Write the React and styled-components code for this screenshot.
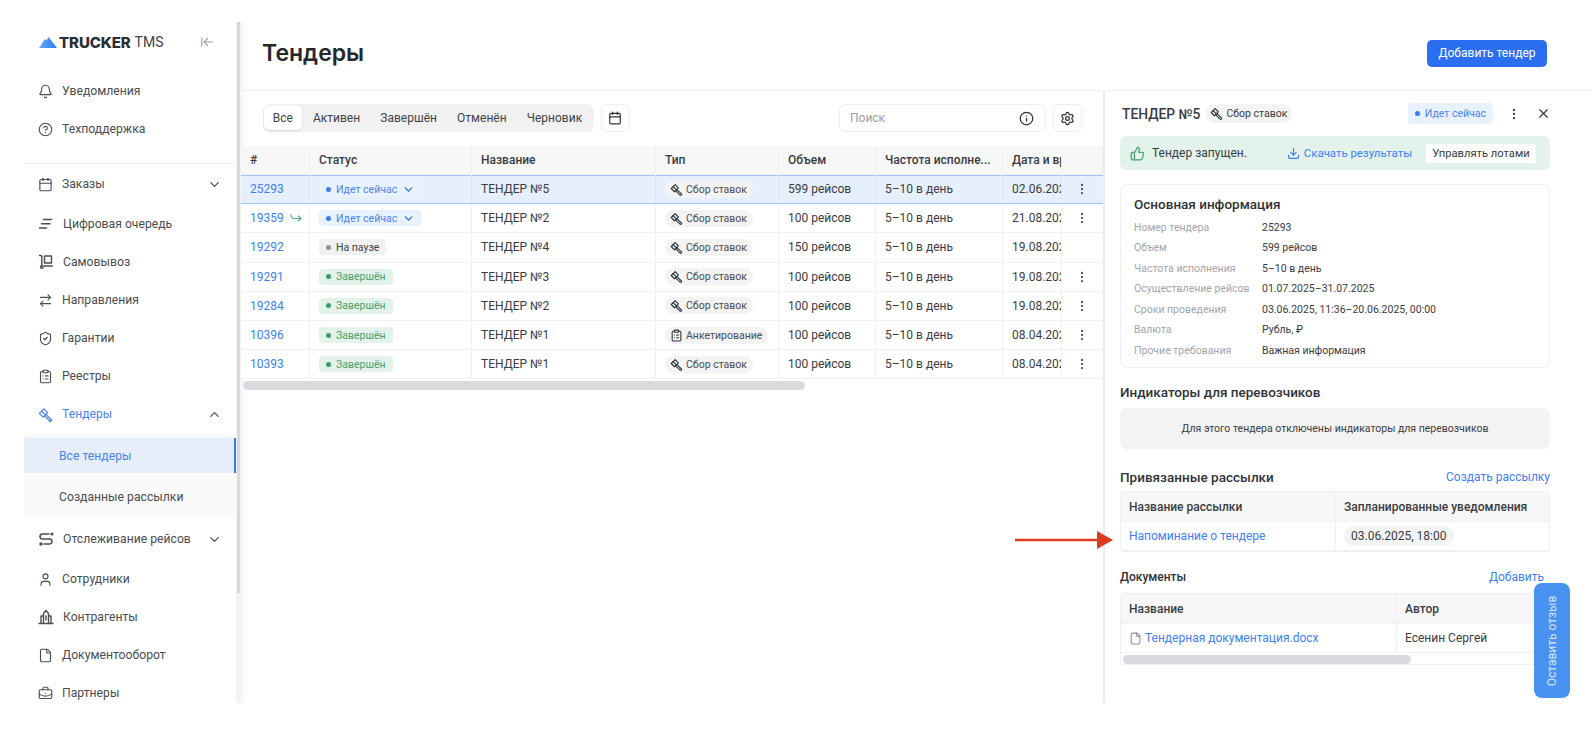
import React from 'react'
import styled, { createGlobalStyle } from 'styled-components'
import {
  ArrowLeftToLine, ArrowRightLeft, Bell, BriefcaseBusiness, Calendar, ChevronDown, ChevronUp,
  CircleHelp, ClipboardList, Download, File, Info, MoreVertical, Settings,
  ShieldCheck, ThumbsUp, User, X,
} from 'lucide-react'

const GlobalStyle = createGlobalStyle`
  html, body { margin: 0; padding: 0; background: #fff; }
  body { font-family: Roboto, "Noto Sans", sans-serif; color: #2b2d33; overflow: hidden; }
  * { box-sizing: border-box; }
`

const Page = styled.div`
  position: relative;
  width: 1592px;
  height: 736px;
  padding: 22px 0 33px 24px;
  display: flex;
  overflow: hidden;
`

const Sidebar = styled.aside`
  width: 212px;
  flex: none;
  overflow: hidden;
  display: flex;
  flex-direction: column;
`

const LogoRow = styled.div`
  height: 40px;
  flex: none;
  margin-bottom: 10px;
  padding: 0 22px 0 15px;
  display: flex;
  align-items: center;
  justify-content: space-between;
  color: #9a9da3;
`

const Logo = styled.div`
  display: flex;
  align-items: center;
  gap: 2px;
  font-family: Inter, sans-serif;
  font-size: 15px;
  letter-spacing: -0.1px;
  color: #2b2d33;
  b { font-weight: 800; margin-right: 2px; }
  span { font-family: Roboto, sans-serif; font-weight: 400; font-size: 14px; letter-spacing: 0; color: #3f4247; }
`

const NavItem = styled.div`
  height: 38px;
  flex: none;
  display: flex;
  align-items: center;
  padding: 0 14px 0 14px;
  gap: 9px;
  font-size: 12.2px;
  color: ${p => (p.$active ? '#4c83f0' : '#4a4d52')};
  margin-top: ${p => (p.$gap ? '2px' : '0')};
  span { flex: 1; white-space: nowrap; }
  svg { flex: none; }
`

const NavDivider = styled.div`
  height: 1px;
  flex: none;
  background: #f0f0f1;
  margin: 15px 0 1px;
`

const SubNav = styled.div`
  flex: none;
  margin: 2px 0;
  padding-top: 3px;
  background: #fafafa;
  display: flex;
  flex-direction: column;
`

const SubItem = styled.div`
  height: ${p => (p.$active ? '35px' : '45px')};
  padding-top: ${p => (p.$active ? '0' : '3px')};
  display: flex;
  align-items: center;
  padding-left: 35px;
  font-size: 12.2px;
  color: ${p => (p.$active ? '#4c83f0' : '#4a4d52')};
  background: ${p => (p.$active ? '#e6eefb' : 'transparent')};
  border-right: 2px solid ${p => (p.$active ? '#3b7cf5' : 'transparent')};
`

const ScrollTrack = styled.div`
  width: 5px;
  flex: none;
  background: #f4f4f5;
`

const ScrollThumb = styled.div`
  width: 3px;
  height: 571px;
  margin-left: 1px;
  background: #d9d9dc;
`

const Main = styled.main`
  flex: 1;
  min-width: 0;
  display: flex;
  flex-direction: column;
  box-shadow: inset 8px 0 8px -8px rgba(0, 0, 0, 0.08);
`

const Header = styled.header`
  height: 69px;
  flex: none;
  padding: 0 45px 6px 21px;
  display: flex;
  align-items: center;
  justify-content: space-between;
  border-bottom: 1px solid #f1f1f2;
`

const Title = styled.h1`
  margin: 0;
  font-family: Inter, sans-serif;
  font-size: 23px;
  font-weight: 600;
  color: #25272c;
`

const PrimaryButton = styled.button`
  width: 120px;
  height: 27px;
  border: 0;
  border-radius: 5px;
  background: #2b6ff0;
  color: #fff;
  font: 400 12px Roboto, sans-serif;
`

const Body = styled.div`
  flex: 1;
  min-height: 0;
  display: flex;
`

const TablePane = styled.section`
  width: 862px;
  flex: none;
  display: flex;
  flex-direction: column;
`

const Toolbar = styled.div`
  display: flex;
  align-items: center;
  height: 28px;
  margin: 13px 21px 14px 22px;
  gap: 7px;
`

const Segments = styled.div`
  height: 28px;
  padding: 2px 3px 2px 1px;
  border-radius: 7px;
  background: #f1f1f2;
  display: flex;
  align-items: center;
`

const Segment = styled.div`
  height: 24px;
  padding: 0 8.7px;
  margin-right: ${p => (p.$last ? '0' : '2.8px')};
  border-radius: 5px;
  display: flex;
  align-items: center;
  font-size: 12px;
  color: #3f4247;
  background: ${p => (p.$active ? '#fff' : 'transparent')};
  box-shadow: ${p => (p.$active ? '0 1px 2px rgba(0,0,0,.12)' : 'none')};
`

const IconButton = styled.div`
  width: 29px;
  height: 28px;
  flex: none;
  border: 1px solid #eeeeef;
  border-radius: 6px;
  display: flex;
  align-items: center;
  justify-content: center;
  color: #303237;
`

const Search = styled.div`
  width: 207px;
  height: 28px;
  margin-left: auto;
  padding: 0 11px 0 10px;
  border: 1px solid #eeeeef;
  border-radius: 6px;
  display: flex;
  align-items: center;
  justify-content: space-between;
  font-size: 12px;
  color: #9a9da3;
  svg { color: #303237; }
`

const TENDER_COLUMNS = '69px 162px 184px 123px 97px 127px 59px 41px'

const GridRow = styled.div`
  display: grid;
  grid-template-columns: ${TENDER_COLUMNS};
  height: ${p => (p.$head ? '29px' : '29.2px')};
  background: ${p => (p.$head ? '#f7f7f7' : p.$selected ? '#e6effc' : '#fff')};
  box-shadow: ${p => (p.$selected ? 'inset 0 1px 0 #a6c3f5, inset 0 -1px 0 #a6c3f5' : 'none')};
`

const Cell = styled.div`
  min-width: 0;
  padding-left: 9px;
  display: flex;
  align-items: center;
  gap: 6px;
  overflow: hidden;
  white-space: nowrap;
  font-size: 12px;
  font-weight: ${p => (p.$head ? 500 : 400)};
  color: #3a3c42;
  border-right: 1px solid ${p => (p.$selected ? '#dbe6f8' : '#f1f1f2')};
  border-bottom: 1px solid ${p => (p.$selected ? 'transparent' : '#f1f1f2')};
`

const ActionCell = styled(Cell)`
  padding-left: 13px;
  border-right: 0;
  color: #55585e;
`

const Link = styled.span`
  color: #3f80f5;
  font-size: 12px;
`

const StatusChip = styled.span`
  height: 16px;
  padding: 0 ${p => (p.$open ? '6px' : '7px')} 0 7px;
  border-radius: 4px;
  display: inline-flex;
  align-items: center;
  gap: 5px;
  font-size: 10.5px;
  color: ${p => ({ blue: '#4c83f0', gray: '#3f4247', green: '#45a06e' }[p.$tone])};
  background: ${p => ({ blue: '#e8f1fe', gray: '#f1f1f2', green: '#e3f3ea' }[p.$tone])};
  &::before {
    content: '';
    width: 5px;
    height: 5px;
    border-radius: 50%;
    background: ${p => ({ blue: '#3b7cf5', gray: '#8e9096', green: '#3a9a65' }[p.$tone])};
  }
`

const TypeChip = styled.span`
  height: 17px;
  padding: 0 6px 0 5px;
  border-radius: 9px;
  display: inline-flex;
  align-items: center;
  gap: 3px;
  font-size: 10.5px;
  color: #4a4d52;
  background: #f3f3f4;
  svg { color: #303237; }
`

const HScroll = styled.div`
  height: 9px;
  margin: 2px 0 0 2px;
  width: ${p => p.$width};
  border-radius: 5px;
  background: #d9dadd;
`

const Pane = styled.aside`
  flex: 1;
  min-width: 0;
  padding: 12px 42px 0 15px;
  border-left: 2px solid #ececee;
  display: flex;
  flex-direction: column;
`

const PaneHead = styled.div`
  height: 21px;
  padding: 0 2px;
  margin-bottom: 12px;
  display: flex;
  align-items: center;
  gap: 6px;
  color: #3a3c42;
`

const PaneTitle = styled.div`
  font-size: 13.8px;
  font-weight: 500;
  white-space: nowrap;
`

const PaneChip = styled(TypeChip)`
  height: 19px;
  padding: 0 5px 0 4px;
  color: #3a3c42;
`

const HeadStatus = styled(StatusChip)`
  height: 21px;
  padding: 0 7px;
  margin-left: auto;
  margin-right: 8px;
  font-size: 10.5px;
`

const HeadClose = styled.div`
  margin-left: 9px;
  margin-right: -3px;
  display: flex;
`

const Banner = styled.div`
  height: 34px;
  flex: none;
  padding: 0 14px 0 10px;
  border-radius: 6px;
  background: #e3f3ec;
  display: flex;
  align-items: center;
  font-size: 12px;
  color: #3a3c42;
  svg { flex: none; }
`

const BannerText = styled.span`
  margin-left: 7px;
  flex: 1;
`

const BannerLink = styled(Link)`
  display: inline-flex;
  align-items: center;
  gap: 4px;
  font-size: 11.4px;
`

const BannerButton = styled.div`
  width: 110px;
  height: 19px;
  margin-left: 14px;
  border-radius: 2px;
  background: #fff;
  display: flex;
  align-items: center;
  justify-content: center;
  font-size: 11.2px;
`

const InfoCard = styled.div`
  height: 184px;
  flex: none;
  margin-top: 14px;
  padding: 9px 13px 0;
  border: 1px solid #f0f0f1;
  border-radius: 7px;
`

const CardTitle = styled.div`
  height: 20px;
  margin-bottom: 3px;
  display: flex;
  align-items: center;
  font-size: 13.5px;
  font-weight: 500;
  color: #303237;
`

const InfoRow = styled.div`
  height: 20.5px;
  display: grid;
  grid-template-columns: 128px 1fr;
  align-items: center;
  font-size: 10.5px;
  color: #3a3c42;
  span:first-child { color: #a3a5aa; }
`

const SectionHead = styled.div`
  height: 20px;
  flex: none;
  margin-top: ${p => p.$top};
  margin-bottom: ${p => p.$bottom};
  padding-right: ${p => p.$inset || '0'};
  display: flex;
  align-items: center;
  justify-content: space-between;
`

const SectionTitle = styled.div`
  font-size: ${p => p.$size || '13.5px'};
  font-weight: 500;
  color: #303237;
`

const EmptyBox = styled.div`
  height: 41px;
  flex: none;
  border-radius: 7px;
  background: #f3f3f4;
  display: flex;
  align-items: center;
  justify-content: center;
  font-size: 10.5px;
  color: #3a3c42;
`

const MiniTable = styled.div`
  flex: none;
  border: 1px solid #f0f0f1;
  border-radius: 3px;
  overflow: hidden;
`

const MiniRow = styled.div`
  display: grid;
  grid-template-columns: ${p => p.$columns};
  height: ${p => p.$height};
  background: ${p => (p.$head ? '#f7f7f7' : '#fff')};
`

const MiniCell = styled(Cell)`
  padding-left: 8px;
  gap: 3px;
  &:last-child { border-right: 0; }
`

const DateChip = styled.span`
  height: 20px;
  padding: 0 7px;
  border-radius: 10px;
  background: #f3f3f4;
  display: inline-flex;
  align-items: center;
  font-size: 12px;
`

const FeedbackTab = styled.div`
  position: absolute;
  left: 1534px;
  top: 583px;
  width: 36px;
  height: 115px;
  border-radius: 8px;
  background: #4a92f2;
  color: #d5e6fc;
  display: flex;
  align-items: center;
  justify-content: center;
  font-size: 12px;
  white-space: nowrap;
  span { transform: rotate(-90deg); }
`

const ArrowMark = styled.svg`
  position: absolute;
  left: 1015px;
  top: 531px;
`

const GavelIcon = ({ size = 15 }) => (
  <svg width={size} height={size} viewBox="0 0 16 16" fill="none" stroke="currentColor" strokeWidth="1.4" strokeLinecap="round" strokeLinejoin="round">
    <path d="M1.500 6.800 6.300 2l4 4-4.800 4.800Z" />
    <path d="M3.900 4.400 7.900 8.400" />
    <path d="M8.900 8.400 14 13.400a1.100 1.100 0 0 1-1.600 1.500L7.400 9.900" />
  </svg>
)

const QueueIcon = () => (
  <svg width="16" height="16" viewBox="0 0 16 16" fill="none" stroke="currentColor" strokeWidth="1.4" strokeLinecap="round">
    <path d="M5.500 3.500h8M3.500 7.800h8.500M1.500 12h7" />
  </svg>
)

const PickupIcon = () => (
  <svg width="16" height="16" viewBox="0 0 16 16" fill="none" stroke="currentColor" strokeWidth="1.4" strokeLinecap="round" strokeLinejoin="round">
    <path d="M1.500 1.500h1.300a1 1 0 0 1 1 1v9" />
    <path d="M6.500 2h7v7h-7Z" />
    <path d="M6 12h8.500" />
    <circle cx="3.800" cy="13" r="1.300" />
  </svg>
)

const TrackingIcon = () => (
  <svg width="16" height="16" viewBox="0 0 16 16" fill="none" stroke="currentColor" strokeWidth="1.5" strokeLinecap="round" strokeLinejoin="round">
    <path d="M11 3H4.500a2.300 2.300 0 0 0 0 5h7a2.300 2.300 0 0 1 0 5H6" />
    <circle cx="14" cy="3" r="0.8" />
    <circle cx="3" cy="13" r="1" />
  </svg>
)

const CounterpartyIcon = () => (
  <svg width="16" height="16" viewBox="0 0 16 16" fill="none" stroke="currentColor" strokeWidth="1.4" strokeLinecap="round" strokeLinejoin="round">
    <path d="M1 14.500h14M3 14.500V7h2.500M5.500 14.500V4.500L8 1.500l2.500 3v10M10.500 7H13v7.500M8 7v4" />
  </svg>
)

const ReturnArrow = () => (
  <svg width="12" height="10" viewBox="0 0 12 10" fill="none" stroke="#57ad82" strokeWidth="1.1" strokeLinecap="round" strokeLinejoin="round">
    <path d="M1 1.500c0 3 1 4 3 4h7M8.500 3l2.500 2.500L8.500 8" />
  </svg>
)

const MountainLogo = () => (
  <svg width="18" height="11" viewBox="0 0 18 11">
    <defs>
      <linearGradient id="peak" x1="0" x2="1" y1="0" y2="0">
        <stop offset="0" stopColor="#63a6f8" />
        <stop offset="1" stopColor="#2f7cf0" />
      </linearGradient>
    </defs>
    <path d="M0 11 6 2 7.500 3.500 9.500 0 13 4.500 18 11Z" fill="url(#peak)" />
  </svg>
)

const navTop = [
  { label: 'Заказы', icon: <Calendar size={15} strokeWidth={1.8} />, chevron: true },
  { label: 'Цифровая очередь', icon: <QueueIcon />, gap: true },
  { label: 'Самовывоз', icon: <PickupIcon /> },
  { label: 'Направления', icon: <ArrowRightLeft size={15} strokeWidth={1.8} /> },
  { label: 'Гарантии', icon: <ShieldCheck size={15} strokeWidth={1.8} /> },
  { label: 'Реестры', icon: <ClipboardList size={15} strokeWidth={1.8} /> },
]

const navBottom = [
  { label: 'Сотрудники', icon: <User size={15} strokeWidth={1.8} />, gap: true },
  { label: 'Контрагенты', icon: <CounterpartyIcon /> },
  { label: 'Документооборот', icon: <File size={15} strokeWidth={1.8} /> },
  { label: 'Партнеры', icon: <BriefcaseBusiness size={15} strokeWidth={1.8} /> },
]

const tenders = [
  { id: '25293', status: 'blue', name: 'ТЕНДЕР №5', volume: '599 рейсов', date: '02.06.2025, 11:36', selected: true },
  { id: '19359', status: 'blue', name: 'ТЕНДЕР №2', volume: '100 рейсов', date: '21.08.2024, 10:00', repeat: true },
  { id: '19292', status: 'gray', name: 'ТЕНДЕР №4', volume: '150 рейсов', date: '19.08.2024, 10:00', noMenu: true },
  { id: '19291', status: 'green', name: 'ТЕНДЕР №3', volume: '100 рейсов', date: '19.08.2024, 10:00' },
  { id: '19284', status: 'green', name: 'ТЕНДЕР №2', volume: '100 рейсов', date: '19.08.2024, 10:00' },
  { id: '10396', status: 'green', name: 'ТЕНДЕР №1', volume: '100 рейсов', date: '08.04.2024, 10:00', survey: true },
  { id: '10393', status: 'green', name: 'ТЕНДЕР №1', volume: '100 рейсов', date: '08.04.2024, 10:00' },
]

const statusLabels = { blue: 'Идет сейчас', gray: 'На паузе', green: 'Завершён' }

const info = [
  ['Номер тендера', '25293'],
  ['Объем', '599 рейсов'],
  ['Частота исполнения', '5–10 в день'],
  ['Осуществление рейсов', '01.07.2025–31.07.2025'],
  ['Сроки проведения', '03.06.2025, 11:36–20.06.2025, 00:00'],
  ['Валюта', 'Рубль, ₽'],
  ['Прочие требования', 'Важная информация'],
]

const NavLink = ({ item }) => (
  <NavItem $gap={item.gap}>
    {item.icon}
    <span>{item.label}</span>
    {item.chevron && <ChevronDown size={15} />}
  </NavItem>
)

const TenderRow = ({ row }) => (
  <GridRow $selected={row.selected}>
    <Cell $selected={row.selected}>
      <Link>{row.id}</Link>
      {row.repeat && <ReturnArrow />}
    </Cell>
    <Cell $selected={row.selected}>
      <StatusChip $tone={row.status} $open={row.status === 'blue'}>
        {statusLabels[row.status]}
        {row.status === 'blue' && <ChevronDown size={13} strokeWidth={2.4} color="#2b6ff0" />}
      </StatusChip>
    </Cell>
    <Cell $selected={row.selected}>{row.name}</Cell>
    <Cell $selected={row.selected}>
      <TypeChip>
        {row.survey ? <ClipboardList size={13} /> : <GavelIcon size={13} />}
        {row.survey ? 'Анкетирование' : 'Сбор ставок'}
      </TypeChip>
    </Cell>
    <Cell $selected={row.selected}>{row.volume}</Cell>
    <Cell $selected={row.selected}>5–10 в день</Cell>
    <Cell $selected={row.selected}>{row.date}</Cell>
    <ActionCell $selected={row.selected}>
      {!row.noMenu && <MoreVertical size={14} />}
    </ActionCell>
  </GridRow>
)

const App = () => (
  <Page>
    <GlobalStyle />
    <Sidebar>
      <LogoRow>
        <Logo>
          <MountainLogo />
          <b>TRUCKER</b>
          <span>TMS</span>
        </Logo>
        <ArrowLeftToLine size={14} />
      </LogoRow>
      <NavLink item={{ label: 'Уведомления', icon: <Bell size={15} strokeWidth={1.8} /> }} />
      <NavLink item={{ label: 'Техподдержка', icon: <CircleHelp size={15} strokeWidth={1.8} /> }} />
      <NavDivider />
      {navTop.map(item => <NavLink key={item.label} item={item} />)}
      <NavItem $active>
        <GavelIcon />
        <span>Тендеры</span>
        <ChevronUp size={15} color="#4a4d52" />
      </NavItem>
      <SubNav>
        <SubItem $active>Все тендеры</SubItem>
        <SubItem>Созданные рассылки</SubItem>
      </SubNav>
      <NavLink item={{ label: 'Отслеживание рейсов', icon: <TrackingIcon />, chevron: true }} />
      {navBottom.map(item => <NavLink key={item.label} item={item} />)}
    </Sidebar>
    <ScrollTrack>
      <ScrollThumb />
    </ScrollTrack>
    <Main>
      <Header>
        <Title>Тендеры</Title>
        <PrimaryButton>Добавить тендер</PrimaryButton>
      </Header>
      <Body>
        <TablePane>
          <Toolbar>
            <Segments>
              <Segment $active>Все</Segment>
              <Segment>Активен</Segment>
              <Segment>Завершён</Segment>
              <Segment>Отменён</Segment>
              <Segment $last>Черновик</Segment>
            </Segments>
            <IconButton><Calendar size={14} strokeWidth={2} /></IconButton>
            <Search>
              Поиск
              <Info size={15} strokeWidth={2} />
            </Search>
            <IconButton><Settings size={15} /></IconButton>
          </Toolbar>
          <GridRow $head>
            {['#', 'Статус', 'Название', 'Тип', 'Объем', 'Частота исполне...', 'Дата и время', ''].map(h => (
              <Cell $head key={h}>{h}</Cell>
            ))}
          </GridRow>
          {tenders.map(row => <TenderRow key={row.id} row={row} />)}
          <HScroll $width="562px" />
        </TablePane>
        <Pane>
          <PaneHead>
            <PaneTitle>ТЕНДЕР №5</PaneTitle>
            <PaneChip><GavelIcon size={13} />Сбор ставок</PaneChip>
            <HeadStatus $tone="blue">Идет сейчас</HeadStatus>
            <MoreVertical size={14} />
            <HeadClose><X size={15} /></HeadClose>
          </PaneHead>
          <Banner>
            <ThumbsUp size={15} color="#45a06e" strokeWidth={2} />
            <BannerText>Тендер запущен.</BannerText>
            <BannerLink><Download size={13} strokeWidth={2.2} />Скачать результаты</BannerLink>
            <BannerButton>Управлять лотами</BannerButton>
          </Banner>
          <InfoCard>
            <CardTitle>Основная информация</CardTitle>
            {info.map(([label, value]) => (
              <InfoRow key={label}>
                <span>{label}</span>
                <span>{value}</span>
              </InfoRow>
            ))}
          </InfoCard>
          <SectionHead $top="14px" $bottom="6px">
            <SectionTitle>Индикаторы для перевозчиков</SectionTitle>
          </SectionHead>
          <EmptyBox>Для этого тендера отключены индикаторы для перевозчиков</EmptyBox>
          <SectionHead $top="18px" $bottom="4px">
            <SectionTitle>Привязанные рассылки</SectionTitle>
            <Link>Создать рассылку</Link>
          </SectionHead>
          <MiniTable>
            <MiniRow $head $columns="215px 1fr" $height="30px">
              <MiniCell $head>Название рассылки</MiniCell>
              <MiniCell $head>Запланированные уведомления</MiniCell>
            </MiniRow>
            <MiniRow $columns="215px 1fr" $height="29px">
              <MiniCell><Link>Напоминание о тендере</Link></MiniCell>
              <MiniCell><DateChip>03.06.2025, 18:00</DateChip></MiniCell>
            </MiniRow>
          </MiniTable>
          <SectionHead $top="15px" $bottom="6px" $inset="6px">
            <SectionTitle $size="12px">Документы</SectionTitle>
            <Link>Добавить</Link>
          </SectionHead>
          <MiniTable>
            <MiniRow $head $columns="276px 1fr" $height="30px">
              <MiniCell $head>Название</MiniCell>
              <MiniCell $head>Автор</MiniCell>
            </MiniRow>
            <MiniRow $columns="276px 1fr" $height="29px">
              <MiniCell><File size={13} color="#8e9096" /><Link>Тендерная документация.docx</Link></MiniCell>
              <MiniCell>Есенин Сергей</MiniCell>
            </MiniRow>
            <HScroll $width="288px" />
          </MiniTable>
        </Pane>
      </Body>
    </Main>
    <ArrowMark width="98" height="18" viewBox="0 0 98 18">
      <path d="M0 7.800h82V0l16 9-16 9v-7.800H0Z" fill="#dd3a22" />
    </ArrowMark>
    <FeedbackTab><span>Оставить отзыв</span></FeedbackTab>
  </Page>
)

export default App
